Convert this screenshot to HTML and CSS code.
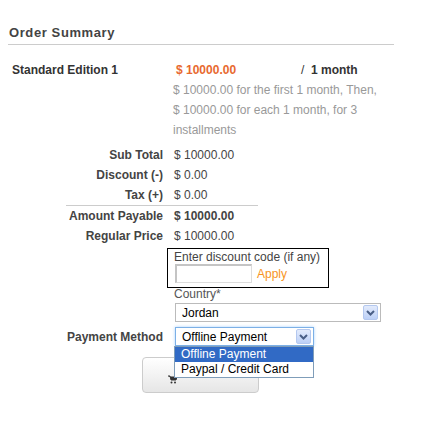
FILE: index.html
```html
<!DOCTYPE html>
<html lang="en">
<head>
  <meta charset="UTF-8" />
  <title>Order Summary</title>
  <link rel="stylesheet" href="styles.css">
</head>
<body>
  <div class="summary">
    <h2>Order Summary</h2>

    <div class="product">
      <span class="product-name">Standard Edition 1</span>
      <span class="product-price">$ 10000.00</span>
      <span class="product-period">/ &nbsp;<b>1 month</b></span>
    </div>
    <div class="product-note">
      $ 10000.00 for the first 1 month, Then,<br>
      $ 10000.00 for each 1 month, for 3<br>
      installments
    </div>

    <div class="totals">
      <div class="row"><span class="label">Sub Total</span><span>$ 10000.00</span></div>
      <div class="row"><span class="label">Discount (-)</span><span>$ 0.00</span></div>
      <div class="row sep"><span class="label">Tax (+)</span><span>$ 0.00</span></div>
      <div class="row"><span class="label">Amount Payable</span><span class="strong">$ 10000.00</span></div>
      <div class="row"><span class="label">Regular Price</span><span>$ 10000.00</span></div>
    </div>

    <div class="discount">
      <div class="discount-label">Enter discount code (if any)</div>
      <div class="discount-field">
        <span class="text-input"></span>
        <a class="apply" href="#">Apply</a>
      </div>
    </div>

    <div class="country">
      <div class="country-label">Country*</div>
      <div class="select country-select">
        <span>Jordan</span>
        <span class="select-arrow">
          <svg width="9" height="6" viewBox="0 0 9 6"><path d="M1 1l3.5 3.5L8 1" fill="none" stroke="#4a5f86" stroke-width="2"/></svg>
        </span>
      </div>
    </div>

    <div class="payment">
      <span class="payment-label">Payment Method</span>
      <div class="select payment-select">
        <span>Offline Payment</span>
        <span class="select-arrow">
          <svg width="9" height="6" viewBox="0 0 9 6"><path d="M1 1l3.5 3.5L8 1" fill="none" stroke="#4a5f86" stroke-width="2"/></svg>
        </span>
        <ul class="options">
          <li class="selected">Offline Payment</li>
          <li>Paypal / Credit Card</li>
        </ul>
      </div>
    </div>

    <button class="order-btn" type="button">
      <svg class="cart" width="9" height="9" viewBox="0 0 9 9">
        <path d="M0 1h2l1 4h5l1-3H2.5" fill="#333" stroke="#333" stroke-width="1"/>
        <circle cx="3.5" cy="7.5" r="1" fill="#333"/>
        <circle cx="7" cy="7.5" r="1" fill="#333"/>
      </svg>
    </button>
  </div>
</body>
</html>
```

FILE: styles.css
```css
body {
  margin: 0;
  font-family: 'Liberation Sans', Arial, sans-serif;
  font-size: 12px;
  color: #444;
  background: #fff;
}

.summary {
  width: 386px;
  padding-left: 8px;
}

h2 {
  margin: 0;
  padding: 27px 0 5px 1px;
  font-size: 13px;
  line-height: 12px;
  letter-spacing: 0.6px;
  color: #444;
  border-bottom: 1px solid #ccc;
}

.product {
  display: flex;
  margin-top: 15px;
  padding-left: 4px;
  line-height: 20px;
  font-weight: bold;
  color: #333;
}

.product-name {
  width: 164px;
}

.product-price {
  width: 125px;
  color: #e8692f;
}

.product-period {
  font-weight: normal;
}

.product-period b {
  font-weight: bold;
}

.product-note {
  padding-left: 165px;
  line-height: 20px;
  color: #999;
}

.totals {
  margin: 5px 0 0 58px;
  width: 192px;
}

.row {
  display: flex;
  line-height: 20px;
}

.row.sep {
  border-bottom: 1px solid #ccc;
}

.row .label {
  width: 97px;
  padding-right: 11px;
  text-align: right;
  font-weight: bold;
  white-space: nowrap;
}

.row .strong {
  font-weight: bold;
}

.discount {
  margin: 2px 0 0 159px;
  width: 160px;
  height: 38px;
  border: 1px solid #000;
}

.discount-label {
  padding: 2px 0 0 6px;
  line-height: 13px;
  color: #444;
}

.discount-field {
  display: flex;
  align-items: center;
  padding-left: 7px;
}

.text-input {
  width: 74px;
  height: 16px;
  border-style: solid;
  border-width: 2px 1px 1px 2px;
  border-color: #c4c4c4 #ddd #ddd #c4c4c4;
}

.apply {
  margin-left: 5px;
  color: #f7941e;
  text-decoration: none;
}

.country {
  padding-left: 166px;
}

.country-label {
  line-height: 12px;
  color: #555;
}

.select {
  position: relative;
  display: flex;
  align-items: center;
  justify-content: space-between;
  box-sizing: border-box;
  height: 19px;
  padding: 0 2px 0 6px;
  background: #fff;
  border: 1px solid #bbb;
  color: #000;
}

.country-select {
  margin: 3px 0 0 1px;
  width: 206px;
}

.select-arrow {
  display: flex;
  align-items: center;
  justify-content: center;
  width: 13px;
  height: 13px;
  border: 1px solid #b4c8ef;
  border-radius: 2px;
  background: linear-gradient(#e3ebfc, #bcd0f7);
}

.payment {
  display: flex;
  align-items: center;
  margin-top: 5px;
}

.payment-label {
  width: 155px;
  text-align: right;
  font-weight: bold;
}

.payment-select {
  margin-left: 12px;
  width: 139px;
  border-color: #7cb0e6;
  box-shadow: 0 0 3px #a9d2ff;
}

.options {
  position: absolute;
  top: 18px;
  left: -2px;
  z-index: 2;
  width: 138px;
  margin: 0;
  padding: 0;
  list-style: none;
  background: #fff;
  border: 1px solid #7f9db9;
}

.options li {
  padding-left: 6px;
  line-height: 15px;
}

.options li.selected {
  background: #316ac5;
  color: #fff;
}

.order-btn {
  display: block;
  margin: 11px 0 0 134px;
  width: 117px;
  height: 36px;
  padding: 8px 0 0 25px;
  text-align: left;
  border: 1px solid #ccc;
  border-radius: 4px;
  background: linear-gradient(#fff, #e6e6e6);
}
```
